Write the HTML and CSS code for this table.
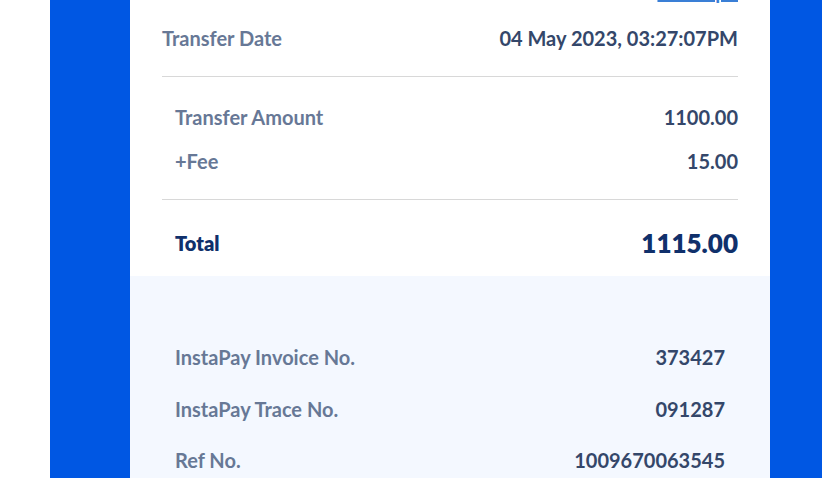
FILE: index.html
```html
<!DOCTYPE html>
<html>
<head>
<meta charset="utf-8">
<link rel="stylesheet" href="styles.css">
</head>
<body>
<div class="page">
  <div class="card">
    <div class="top">
      <div class="row link-row"><span></span><a class="link" href="#">e.com.ph</a></div>
      <div class="row date-row"><span class="label">Transfer Date</span><span class="value">04 May 2023, 03:27:07PM</span></div>
      <hr class="divider">
      <div class="amounts">
        <div class="row amt"><span class="label">Transfer Amount</span><span class="value">1100.00</span></div>
        <div class="row amt"><span class="label">+Fee</span><span class="value">15.00</span></div>
      </div>
      <hr class="divider">
      <div class="row total"><span class="total-label">Total</span><span class="total-value">1115.00</span></div>
    </div>
    <div class="bottom">
      <div class="row ref"><span class="label">InstaPay Invoice No.</span><span class="value">373427</span></div>
      <div class="row ref"><span class="label">InstaPay Trace No.</span><span class="value">091287</span></div>
      <div class="row ref"><span class="label">Ref No.</span><span class="value">1009670063545</span></div>
    </div>
  </div>
</div>
</body>
</html>
```
FILE: styles.css
```css
html, body {
  margin: 0;
  padding: 0;
  background: #ffffff;
  overflow: hidden;
}
body {
  font-family: "Lato", "Noto Sans", sans-serif;
  font-weight: 700;
}
.page {
  margin-left: 50px;
  width: 772px;
  height: 478px;
  background: #0057e3;
  padding: 0 52px 0 80px;
  box-sizing: border-box;
  overflow: hidden;
}
.card {
  background: #ffffff;
  margin-top: -21px;
}
.top {
  padding: 0 32px;
}
.row {
  display: flex;
  justify-content: space-between;
  align-items: center;
  line-height: 24px;
}
.link-row {
  height: 24px;
}
.link {
  color: #3a7fd6;
  font-size: 20px;
  text-decoration: underline;
}
.date-row {
  height: 24px;
  margin-top: 23px;
}
.label {
  color: #677896;
  font-size: 20px;
}
.value {
  color: #34476a;
  font-size: 20px;
}
.divider {
  border: 0;
  border-top: 1px solid #d8d8d8;
  margin: 26px 0 0 0;
  padding: 0;
}
.amounts {
  padding: 28px 0 0 13px;
  display: flex;
  flex-direction: column;
  gap: 20px;
}
.amt {
  height: 24px;
}
.total {
  padding: 27px 0 17px 13px;
  height: 32px;
  line-height: 32px;
}
.total-label {
  color: #10306b;
  font-size: 20px;
  font-weight: 800;
}
.total-value {
  color: #10306b;
  font-size: 26px;
  font-weight: 800;
}
.bottom {
  background: #f4f8ff;
  padding: 69px 45px 40px 45px;
  display: flex;
  flex-direction: column;
  gap: 27.5px;
}
.ref {
  height: 24px;
}
```
